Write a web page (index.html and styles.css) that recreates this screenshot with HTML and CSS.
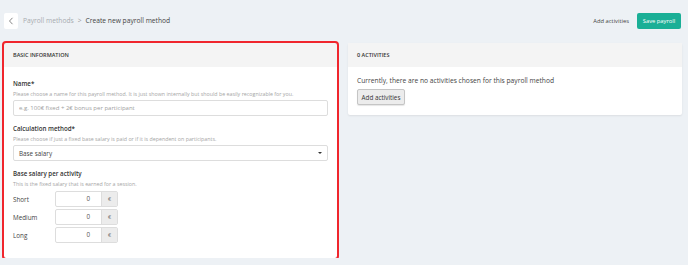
FILE: index.html
```html
<!DOCTYPE html>
<html lang="en">
<head>
    <meta charset="UTF-8">
    <title>Create new payroll method</title>
    <link rel="stylesheet" href="styles.css">
</head>
<body>
    <div class="topbar">
        <div class="crumbs">
            <a href="#" class="back-btn">
                <svg width="6" height="8" viewBox="0 0 6 8"><path d="M4.5 0.8 L1.5 4 L4.5 7.2" fill="none" stroke="#777" stroke-width="0.9"/></svg>
            </a>
            <span class="crumb-link">Payroll methods</span>
            <span class="crumb-sep">&gt;</span>
            <span class="crumb-current">Create new payroll method</span>
        </div>
        <div class="actions">
            <a href="#" class="link-btn">Add activities</a>
            <button class="save-btn">Save payroll</button>
        </div>
    </div>

    <div class="columns">
        <div class="card card-main">
            <div class="card-header">BASIC INFORMATION</div>
            <div class="card-body">
                <div class="field">
                    <label>Name*</label>
                    <p class="help">Please choose a name for this payroll method. It is just shown internally but should be easily recognizable for you.</p>
                    <input type="text" class="text-input" placeholder="e.g. 100€ fixed + 2€ bonus per participant">
                </div>
                <div class="field">
                    <label>Calculation method*</label>
                    <p class="help">Please choose if just a fixed base salary is paid or if it is dependent on participants.</p>
                    <div class="select">
                        <span>Base salary</span>
                        <span class="caret"></span>
                    </div>
                </div>
                <div class="field">
                    <label>Base salary per activity</label>
                    <p class="help">This is the fixed salary that is earned for a session.</p>
                    <div class="salary-row">
                        <span class="salary-label">Short</span>
                        <div class="input-group"><span class="num">0</span><span class="addon">€</span></div>
                    </div>
                    <div class="salary-row">
                        <span class="salary-label">Medium</span>
                        <div class="input-group"><span class="num">0</span><span class="addon">€</span></div>
                    </div>
                    <div class="salary-row">
                        <span class="salary-label">Long</span>
                        <div class="input-group"><span class="num">0</span><span class="addon">€</span></div>
                    </div>
                </div>
            </div>
        </div>

        <div class="card card-side">
            <div class="card-header">0 ACTIVITIES</div>
            <div class="card-body">
                <p class="empty-text">Currently, there are no activities chosen for this payroll method</p>
                <button class="plain-btn">Add activities</button>
            </div>
        </div>
    </div>
</body>
</html>
```

FILE: styles.css
```css
body {
    margin: 0;
    padding: 0;
    font-family: "Open Sans", "Noto Sans", sans-serif;
    background-color: #edf1f5;
    color: #333;
    font-size: 7px;
}

/* Top bar */
.topbar {
    display: flex;
    justify-content: space-between;
    align-items: center;
    padding: 12px 7px 0 4px;
    height: 17px;
}

.crumbs {
    display: flex;
    align-items: center;
}

.back-btn {
    width: 14px;
    height: 16px;
    background-color: #fff;
    border-radius: 2px;
    display: flex;
    align-items: center;
    justify-content: center;
    margin-right: 5px;
}

.crumb-link {
    color: #a7abb0;
    font-size: 6.7px;
}

.crumb-sep {
    color: #999;
    margin: 0 4px;
    font-size: 6.7px;
}

.crumb-current {
    color: #444;
    font-size: 6.7px;
}

.actions {
    display: flex;
    align-items: center;
}

.link-btn {
    color: #444;
    text-decoration: none;
    font-size: 5.8px;
    margin-right: 8px;
}

.save-btn {
    background-color: #1aaf96;
    color: #fff;
    border: none;
    border-radius: 2px;
    font-family: inherit;
    font-size: 5.8px;
    height: 16px;
    width: 44px;
    padding: 0;
}

/* Columns */
.columns {
    display: flex;
    align-items: flex-start;
    gap: 11px;
    padding: 14px 6px 0 4px;
}

.card {
    background-color: #fff;
    border-radius: 2px;
    box-shadow: 0 1px 2px rgba(0, 0, 0, 0.08);
}

.card-main {
    width: 333px;
    outline: 2px solid #f0262d;
}

.card-side {
    flex: 1;
}

.card-header {
    background-color: #f4f4f4;
    height: 24px;
    line-height: 24px;
    padding: 0 9px;
    font-size: 5.5px;
    font-weight: 600;
    color: #333;
}

.card-body {
    padding: 9px 9px 10px 9px;
}

.card-main .card-body {
    padding-top: 12px;
    padding-bottom: 7px;
}

.field {
    margin-bottom: 8px;
}

.field label {
    display: block;
    font-size: 6.2px;
    font-weight: 600;
    color: #333;
    line-height: 10px;
}

.help {
    margin: 0;
    font-size: 5.3px;
    color: #a5a5a5;
    line-height: 10px;
    margin-bottom: 1px;
}

.text-input {
    display: block;
    box-sizing: border-box;
    width: 100%;
    height: 16px;
    border: 1px solid #ddd;
    border-radius: 2px;
    padding: 0 5px;
    font-family: inherit;
    font-size: 6px;
}

.text-input::placeholder {
    color: #a0a0a0;
}

.select {
    box-sizing: border-box;
    height: 16px;
    border: 1px solid #ddd;
    border-radius: 2px;
    padding: 0 5px;
    display: flex;
    align-items: center;
    justify-content: space-between;
    font-size: 6.3px;
    color: #444;
}

.caret {
    width: 0;
    height: 0;
    border-left: 2px solid transparent;
    border-right: 2px solid transparent;
    border-top: 2px solid #333;
}

.salary-row {
    display: flex;
    align-items: center;
    margin-top: 2px;
    height: 16px;
}

.salary-label {
    width: 42px;
    font-size: 6.3px;
    color: #444;
}

.input-group {
    display: flex;
    height: 16px;
    width: 63px;
    box-sizing: border-box;
    border: 1px solid #ddd;
    border-radius: 2px;
}

.num {
    flex: 1;
    text-align: right;
    padding-right: 11px;
    line-height: 14px;
    font-size: 6.3px;
    color: #555;
}

.addon {
    width: 15px;
    background-color: #ececec;
    border-left: 1px solid #ddd;
    text-align: center;
    line-height: 14px;
    font-size: 5.5px;
    color: #777;
}

.empty-text {
    margin: 0 0 3px 0;
    font-size: 6.7px;
    color: #444;
    line-height: 10px;
}

.plain-btn {
    background-color: #ececec;
    border: 1px solid #c5c5c5;
    border-radius: 2px;
    height: 16px;
    width: 48px;
    padding: 0;
    font-family: inherit;
    font-size: 6.3px;
    color: #333;
    box-shadow: 0 1px 1px rgba(0, 0, 0, 0.1);
}
```
